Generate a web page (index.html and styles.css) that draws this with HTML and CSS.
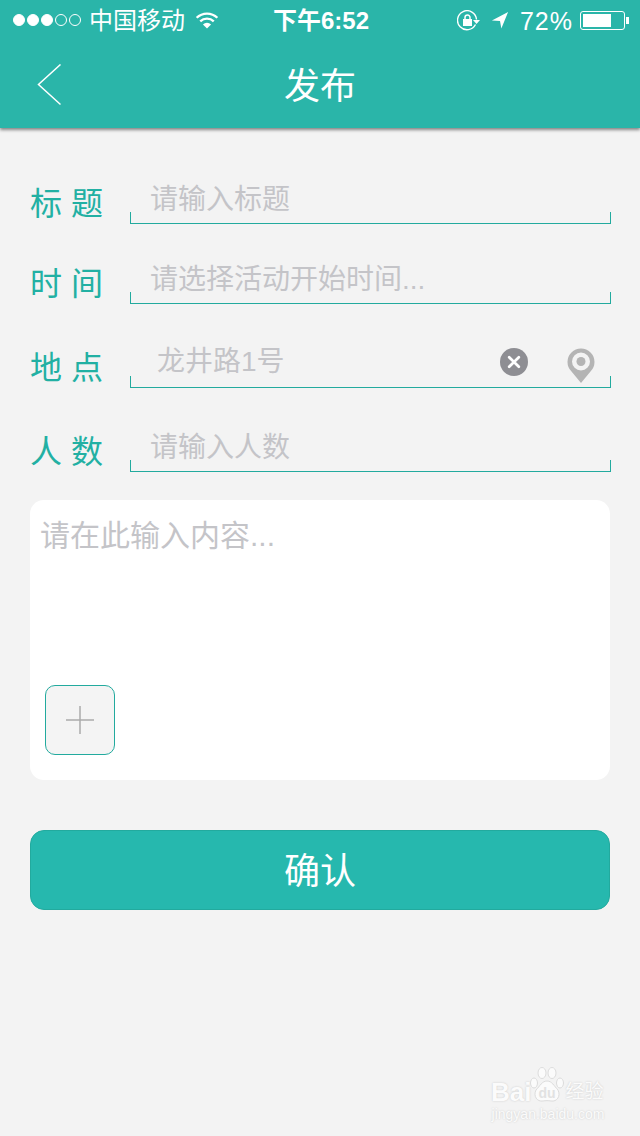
FILE: index.html
```html
<!DOCTYPE html>
<html lang="zh-CN">
<head>
  <meta charset="UTF-8">
  <meta name="viewport" content="width=device-width, initial-scale=1.0">
  <title>发布</title>
  <link rel="stylesheet" href="styles.css">
</head>
<body>
  <header class="topbar">
    <div class="statusbar">
      <div class="status-left">
        <div class="signal">
          <i class="dot on"></i><i class="dot on"></i><i class="dot on"></i><i class="dot"></i><i class="dot"></i>
        </div>
        <span class="carrier">中国移动</span>
        <svg class="wifi" width="24" height="18" viewBox="0 0 26 20">
          <path d="M1.500 7.500a16.500 16.500 0 0 1 23 0" fill="none" stroke="#fff" stroke-width="2.600"/>
          <path d="M5.500 11.500a10.800 10.800 0 0 1 15 0" fill="none" stroke="#fff" stroke-width="2.600"/>
          <path d="M8.500 15a6.500 6.500 0 0 1 9 0L13 19.500z" fill="#fff"/>
        </svg>
      </div>
      <div class="clock">下午6:52</div>
      <div class="status-right">
        <svg class="rotate-lock" width="24" height="22" viewBox="0 0 24 22">
          <path d="M18.500 14.500A9.500 9.500 0 1 1 19.500 9.500" fill="none" stroke="#fff" stroke-width="1.400"/>
          <path d="M16 10h7l-3.500 4z" fill="#fff"/>
          <rect x="6" y="9" width="9" height="7" fill="#fff"/>
          <path d="M8 9V7.500a2.500 2.500 0 0 1 5 0V9" fill="none" stroke="#fff" stroke-width="1.500"/>
        </svg>
        <svg class="arrow" width="18" height="18" viewBox="0 0 20 20">
          <path d="M19 1L1 10.500l9 .5 1.500 8.500z" fill="#fff"/>
        </svg>
        <span class="percent">72%</span>
        <div class="battery"><div class="battery-fill"></div></div>
        <div class="battery-cap"></div>
      </div>
    </div>
    <nav class="navbar">
      <svg class="back" width="24" height="42" viewBox="0 0 24 42">
        <path d="M23.500 .5L1.500 20.500l22 20" fill="none" stroke="#fff" stroke-width="1.500"/>
      </svg>
      <h1>发布</h1>
    </nav>
  </header>

  <main class="content">
    <form class="form">
      <div class="field field-first">
        <label>标 题</label>
        <div class="field-input"><span class="hint">请输入标题</span></div>
      </div>
      <div class="field">
        <label>时 间</label>
        <div class="field-input"><span class="hint">请选择活动开始时间...</span></div>
      </div>
      <div class="field field-tall">
        <label>地 点</label>
        <div class="field-input field-place">
          <span class="hint">龙井路1号</span>
          <svg class="clear" width="28" height="28" viewBox="0 0 29 29">
            <circle cx="14.500" cy="14.500" r="14.500" fill="#8e8e93"/>
            <path d="M9.500 9.500l10 10M19.500 9.500l-10 10" stroke="#fff" stroke-width="2.800" stroke-linecap="round"/>
          </svg>
          <svg class="pin" width="28" height="36" viewBox="0 0 28 36">
            <path fill-rule="evenodd" fill="#b4b4b4" d="M14 35L4.500 23.500A13.500 13.500 0 1 1 23.500 23.500zM14 4.500a9 9 0 1 0 0 18 9 9 0 0 0 0-18z"/>
            <circle cx="14" cy="13.500" r="4.500" fill="#b4b4b4"/>
          </svg>
        </div>
      </div>
      <div class="field field-tall">
        <label>人 数</label>
        <div class="field-input"><span class="hint">请输入人数</span></div>
      </div>

      <div class="editor">
        <div class="editor-hint">请在此输入内容...</div>
        <div class="add-image">
          <svg width="30" height="30" viewBox="0 0 30 30">
            <path d="M15 1v28M1 15h28" stroke="#aaa" stroke-width="1.500"/>
          </svg>
        </div>
      </div>

      <button type="button" class="confirm">确认</button>
    </form>
  </main>

  <div class="watermark">
    <div class="wm-logo">
      <span>Bai</span>
      <svg width="36" height="37" viewBox="0 0 36 37">
        <ellipse cx="5" cy="16" rx="3.500" ry="5" fill="#fbfbfb" stroke="#dcdcdc"/>
        <ellipse cx="13" cy="6" rx="4" ry="5.500" fill="#fbfbfb" stroke="#dcdcdc"/>
        <ellipse cx="23" cy="6" rx="4" ry="5.500" fill="#fbfbfb" stroke="#dcdcdc"/>
        <ellipse cx="31" cy="16" rx="3.500" ry="5" fill="#fbfbfb" stroke="#dcdcdc"/>
        <path d="M18 14c5 0 7 5 11 9 3 6-1 12-7 11-3-.5-5-.5-8 0-6 1-10-5-7-11 4-4 6-9 11-9z" fill="#fbfbfb" stroke="#dcdcdc"/>
        <text class="wm-du" x="18" y="31" text-anchor="middle">du</text>
      </svg>
      <span class="wm-cn">经验</span>
    </div>
    <div class="wm-url">jingyan.baidu.com</div>
  </div>
</body>
</html>
```

FILE: styles.css
```css
* {
  box-sizing: border-box;
}
html, body {
  height: 100%;
}
body {
  margin: 0;
  position: relative;
  overflow: hidden;
  background-color: #f3f3f3;
  font-family: "Liberation Sans", "Noto Sans CJK SC", sans-serif;
}

/* top bar */
.topbar {
  height: 128px;
  background-color: #2ab5a9;
  box-shadow: 0 2px 3px rgba(0, 0, 0, 0.45);
  color: #fff;
}
.statusbar {
  height: 40px;
  display: grid;
  grid-template-columns: 1fr auto 1fr;
  align-items: center;
  padding: 0 11px 0 13px;
}
.status-left, .status-right {
  display: flex;
  align-items: center;
}
.status-right {
  justify-content: flex-end;
}
.signal {
  display: flex;
  gap: 2px;
}
.dot {
  width: 12px;
  height: 12px;
  border-radius: 50%;
  border: 1px solid #fff;
}
.dot.on {
  background-color: #fff;
}
.carrier {
  font-size: 24px;
  margin: 0 0 4px 8px;
}
.wifi {
  margin-left: 10px;
}
.clock {
  font-size: 24px;
  font-weight: bold;
  margin-bottom: 4px;
}
.rotate-lock {
  margin-top: 1px;
}
.arrow {
  margin-left: 10px;
}
.percent {
  font-size: 25px;
  margin: 2px 0 0 11px;
  letter-spacing: 1px;
}
.battery {
  width: 45px;
  height: 19px;
  margin-left: 7px;
  padding: 2px;
  border: 1px solid #fff;
  border-radius: 3px;
}
.battery-fill {
  width: 72%;
  height: 100%;
  background-color: #fff;
}
.battery-cap {
  width: 3px;
  height: 7px;
  margin-left: 1px;
  background-color: #fff;
}
.navbar {
  height: 88px;
  position: relative;
  display: flex;
  align-items: center;
  justify-content: center;
}
.navbar h1 {
  margin: 0 0 3px;
  font-size: 36px;
  font-weight: normal;
}
.back {
  position: absolute;
  left: 37px;
  top: 24px;
}

/* form rows */
.content {
  padding: 0 30px;
}
.field {
  display: flex;
  align-items: flex-end;
  height: 80px;
}
.field-first {
  height: 96px;
}
.field-tall {
  height: 84px;
}
.field label {
  width: 100px;
  font-size: 32px;
  line-height: 40px;
  color: #22b0a3;
}
.field-input {
  flex: 1;
  height: 50px;
  margin-right: -1px;
  padding: 0 0 5px 20px;
  position: relative;
  display: flex;
  align-items: center;
}
.field-input::after {
  content: "";
  position: absolute;
  left: 0;
  right: 0;
  bottom: 0;
  height: 11px;
  border: 1px solid #22aa9e;
  border-top: none;
}
.hint {
  font-size: 28px;
  color: #c4c4c8;
}
.field-place .hint {
  margin: 0 0 4px 7px;
}
.clear {
  margin: 2px 0 0 auto;
}
.pin {
  margin: 11px 16px 0 39px;
}

/* text area */
.editor {
  height: 280px;
  margin-top: 28px;
  padding: 16px 15px 25px 11px;
  background-color: #fff;
  border-radius: 14px;
  display: flex;
  flex-direction: column;
  justify-content: space-between;
}
.editor-hint {
  font-size: 30px;
  line-height: 40px;
  margin-left: -1px;
  color: #c4c4c8;
}
.add-image {
  width: 70px;
  height: 70px;
  margin-left: 4px;
  background-color: #f4f4f4;
  border: 1px solid #22aa9e;
  border-radius: 10px;
  display: flex;
  align-items: center;
  justify-content: center;
}
.confirm {
  display: block;
  width: 100%;
  height: 80px;
  margin-top: 50px;
  padding: 0 0 4px;
  background-color: #26b8ae;
  border: 1px solid #22aa9e;
  border-radius: 14px;
  color: #fff;
  font-family: inherit;
  font-size: 36px;
}

/* watermark */
.watermark {
  position: absolute;
  right: 35px;
  bottom: 14px;
  width: 114px;
  color: #fbfbfb;
  text-align: center;
  text-shadow: 0 0 2px #c8c8c8;
}
.wm-logo {
  display: flex;
  align-items: flex-end;
  font-size: 26px;
  font-weight: bold;
  line-height: 22px;
}
.wm-logo svg {
  margin: 0 0 -1px -2px;
}
.wm-du {
  font-size: 14px;
  font-weight: bold;
  fill: #e2e2e2;
  text-shadow: none;
}
.wm-cn {
  font-size: 19px;
  font-weight: normal;
}
.wm-url {
  font-size: 14px;
  line-height: 16px;
  margin-top: 3px;
  white-space: nowrap;
}
```
